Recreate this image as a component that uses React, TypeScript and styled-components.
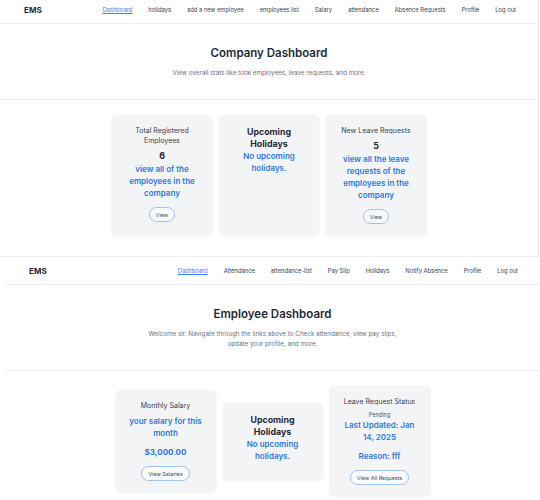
import React from "react";
import styled, { createGlobalStyle } from "styled-components";

const GlobalStyle = createGlobalStyle`
  html, body { margin: 0; padding: 0; background: #ffffff; }
  body { font-family: Inter, "Noto Sans", "Liberation Sans", sans-serif; color: #1f2937; overflow: hidden; }
  * { box-sizing: border-box; }
`;

const Page = styled.div`
  width: 540px;
  margin-top: -4px;
`;

const Frame = styled.section<{ $first?: boolean }>`
  width: ${(p) => (p.$first ? "539px" : "540px")};
  padding-left: ${(p) => (p.$first ? "0" : "5px")};
  border-right: ${(p) => (p.$first ? "1px solid #e3e5e8" : "none")};
  border-bottom: ${(p) => (p.$first ? "1px solid #eceef1" : "none")};
  background: #fff;
`;

const Nav = styled.nav`
  height: 28px;
  display: flex;
  align-items: center;
  justify-content: space-between;
  padding: 0 22px 0 24px;
  border-bottom: 1px solid #eff0f2;
`;

const Brand = styled.div`
  font-size: 8px;
  font-weight: 700;
  color: #1f2937;
  letter-spacing: 0.1px;
`;

const Links = styled.div`
  display: flex;
  align-items: center;
  gap: 16px;
`;

const NavLink = styled.a<{ $active?: boolean }>`
  font-size: 5.8px;
  line-height: 8px;
  color: ${(p) => (p.$active ? "#3b82f6" : "#374151")};
  text-decoration: ${(p) => (p.$active ? "underline" : "none")};
  text-underline-offset: 1px;
  cursor: pointer;
`;

const Hero = styled.header`
  padding: 21px 0 21px;
  border-bottom: 1px solid #eff0f2;
  text-align: center;
  display: flex;
  flex-direction: column;
  align-items: center;
`;

const Title = styled.h1`
  margin: 0 0 7px;
  font-size: 11.5px;
  line-height: 16px;
  font-weight: 600;
  color: #1f2937;
`;

const Subtitle = styled.p`
  margin: 0;
  max-width: 258px;
  font-size: 6.3px;
  line-height: 10px;
  color: #6b7280;
`;

const Cards = styled.div<{ $align: string }>`
  display: flex;
  justify-content: center;
  align-items: ${(p) => p.$align};
  gap: 7px;
  padding: 15px 0 21px;
`;

const Card = styled.div`
  width: 100px;
  background: #f3f4f6;
  border-radius: 5px;
  box-shadow: 0 1px 3px rgba(0, 0, 0, 0.07);
  padding: 11px 12px;
  display: flex;
  flex-direction: column;
  align-items: center;
  text-align: center;
`;

const CardTitle = styled.div`
  font-size: 7px;
  line-height: 10px;
  color: #374151;
  margin-bottom: 4px;
`;

const CardHeading = styled.div`
  font-size: 8.8px;
  line-height: 12px;
  font-weight: 700;
  color: #1f2937;
`;

const Count = styled.div`
  font-size: 8.8px;
  line-height: 12px;
  font-weight: 700;
  color: #1f2937;
  margin-bottom: 1px;
`;

const Status = styled.div`
  font-size: 5.6px;
  line-height: 8px;
  color: #4b5563;
`;

const BlueText = styled.p<{ $bold?: boolean }>`
  margin: 0 0 7px;
  font-size: 8px;
  line-height: 12px;
  font-weight: ${(p) => (p.$bold ? 700 : 600)};
  color: #2f7ad8;
`;

const PillButton = styled.button`
  margin-top: 1px;
  height: 15px;
  padding: 0 6px;
  border: 1px solid #9cc3ee;
  border-radius: 999px;
  background: #f9fafb;
  font-family: inherit;
  font-size: 5.4px;
  color: #3d4d66;
  cursor: pointer;
`;

const adminLinks = [
  "Dashboard",
  "holidays",
  "add a new employee",
  "employees list",
  "Salary",
  "attendance",
  "Absence Requests",
  "Profile",
  "Log out",
];

const employeeLinks = [
  "Dashboard",
  "Attendance",
  "attendance-list",
  "Pay Slip",
  "Holidays",
  "Notify Absence",
  "Profile",
  "Log out",
];

const NavBar = ({ links }: { links: string[] }) => (
  <Nav>
    <Brand>EMS</Brand>
    <Links>
      {links.map((l, i) => (
        <NavLink key={l} $active={i === 0}>
          {l}
        </NavLink>
      ))}
    </Links>
  </Nav>
);

export default function App() {
  return (
    <>
      <GlobalStyle />
      <Page>
        <Frame $first>
          <NavBar links={adminLinks} />
          <Hero>
            <Title>Company Dashboard</Title>
            <Subtitle>
              View overall stats like total employees, leave requests, and more.
            </Subtitle>
          </Hero>
          <Cards $align="stretch">
            <Card>
              <CardTitle>Total Registered Employees</CardTitle>
              <Count>6</Count>
              <BlueText>view all of the employees in the company</BlueText>
              <PillButton>View</PillButton>
            </Card>
            <Card>
              <CardHeading>Upcoming Holidays</CardHeading>
              <BlueText>No upcoming holidays.</BlueText>
            </Card>
            <Card>
              <CardTitle>New Leave Requests</CardTitle>
              <Count>5</Count>
              <BlueText>view all the leave requests of the employees in the company</BlueText>
              <PillButton>View</PillButton>
            </Card>
          </Cards>
        </Frame>
        <Frame>
          <NavBar links={employeeLinks} />
          <Hero>
            <Title>Employee Dashboard</Title>
            <Subtitle>
              Welcome sir. Navigate through the links above to Check attendance, view pay slips,
              update your profile, and more.
            </Subtitle>
          </Hero>
          <Cards $align="center">
            <Card>
              <CardTitle>Monthly Salary</CardTitle>
              <BlueText>your salary for this month</BlueText>
              <BlueText $bold>$3,000.00</BlueText>
              <PillButton>View Salaries</PillButton>
            </Card>
            <Card>
              <CardHeading>Upcoming Holidays</CardHeading>
              <BlueText>No upcoming holidays.</BlueText>
            </Card>
            <Card>
              <CardTitle>Leave Request Status</CardTitle>
              <Status>Pending</Status>
              <BlueText>Last Updated: Jan 14, 2025</BlueText>
              <BlueText>Reason: fff</BlueText>
              <PillButton>View All Requests</PillButton>
            </Card>
          </Cards>
        </Frame>
      </Page>
    </>
  );
}
